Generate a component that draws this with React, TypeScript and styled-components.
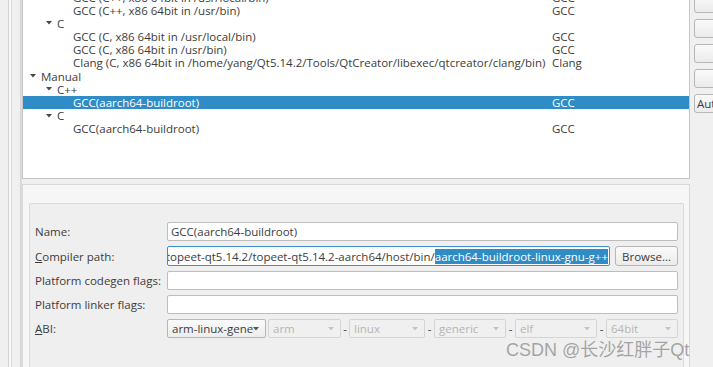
import React from "react";
import styled, { createGlobalStyle } from "styled-components";

const Global = createGlobalStyle`
  html, body { margin: 0; padding: 0; width: 713px; height: 367px; overflow: hidden; background: #f0f0f0; }
  body { font-family: "Open Sans", "Noto Sans", sans-serif; font-size: 11.5px; color: #3c3c3c; }
  * { box-sizing: border-box; }
`;

const Root = styled.div`
  position: relative;
  display: grid;
  grid-template-columns: 22px 668px 4px 80px;
  height: 367px;
  overflow: hidden;
`;

const Gutter = styled.div`
  display: flex;
`;

const Rail = styled.div<{ $left: number; $w: number }>`
  margin-left: ${(p) => p.$left}px;
  width: ${(p) => p.$w}px;
  border-left: 1px solid #d4d4d4;
  border-right: 1px solid #dcdcdc;
  background: #f8f8f8;
`;

const Main = styled.div`
  display: flex;
  flex-direction: column;
  min-width: 0;
`;

const TreePanel = styled.div`
  height: 179px;
  flex: none;
  background: #ffffff;
  border: 1px solid #c6c6c6;
  border-top: none;
  overflow: hidden;
`;

const TreeList = styled.div`
  margin-top: -9.5px;
`;

const Row = styled.div<{ $selected?: boolean }>`
  display: grid;
  grid-template-columns: 529px 1fr;
  height: 13.2px;
  line-height: 13.2px;
  white-space: nowrap;
  background: ${(p) => (p.$selected ? "#308cc6" : "transparent")};
  color: ${(p) => (p.$selected ? "#ffffff" : "#3c3c3c")};
`;

const NameCell = styled.div<{ $level: number }>`
  display: flex;
  align-items: center;
  padding-left: ${(p) => 2 + p.$level * 16}px;
  overflow: hidden;
`;

const Expander = styled.span`
  width: 16px;
  flex: none;
  display: flex;
  align-items: center;
  padding-left: 5px;
`;

const TypeCell = styled.div`
  overflow: hidden;
`;

const DetailsPanel = styled.div`
  margin-top: 5px;
  flex: 1;
  min-width: 0;
  background: #f6f6f6;
  border: 1px solid #d9d9d9;
  border-bottom: none;
  padding: 18px 5px 0 6px;
`;

const GroupBox = styled.div`
  height: 100%;
  background: #efefef;
  border: 1px solid #dadada;
  border-bottom: none;
  border-radius: 2px 2px 0 0;
  padding: 18px 5px 0 5px;
`;

const Form = styled.div`
  display: grid;
  grid-template-columns: 132px minmax(0, 1fr);
  row-gap: 5px;
  align-items: center;
`;

const Label = styled.div`
  white-space: nowrap;
  color: #3c3c3c;
`;

const Mnemonic = styled.span`
  text-decoration: underline;
`;

const Field = styled.div<{ $focused?: boolean; $h?: number }>`
  height: ${(p) => p.$h ?? 19}px;
  background: #ffffff;
  border: 1px solid ${(p) => (p.$focused ? "#3a8fc8" : "#bdbdbd")};
  border-radius: 2px;
  padding: 0 3px;
  display: flex;
  align-items: center;
  overflow: hidden;
  white-space: nowrap;
  min-width: 0;
`;

const PathRow = styled.div`
  display: flex;
  gap: 5px;
  height: 20px;
  min-width: 0;
`;

const PathField = styled(Field)`
  flex: 1 1 0;
  justify-content: flex-end;
  padding: 0 1px 0 2px;
`;

const PathText = styled.span`
  flex: none;
`;

const Selection = styled.span`
  flex: none;
  background: #308cc6;
  color: #ffffff;
`;

const Button = styled.div<{ $w?: number }>`
  width: ${(p) => (p.$w ? `${p.$w}px` : "auto")};
  flex: none;
  height: 20px;
  border: 1px solid #b6b6b6;
  border-radius: 3px;
  background: linear-gradient(#fafafa, #ebebeb);
  display: flex;
  align-items: center;
  justify-content: center;
  color: #3c3c3c;
  white-space: nowrap;
`;

const AbiRow = styled.div`
  display: flex;
  align-items: center;
  height: 19px;
`;

const Combo = styled.div<{ $w: number; $disabled?: boolean }>`
  width: ${(p) => p.$w}px;
  flex: none;
  height: 19px;
  border: 1px solid ${(p) => (p.$disabled ? "#d5d5d5" : "#b6b6b6")};
  border-radius: 2px;
  background: ${(p) => (p.$disabled ? "#f0f0f0" : "linear-gradient(#fbfbfb, #ededed)")};
  color: ${(p) => (p.$disabled ? "#b5b5b5" : "#3c3c3c")};
  display: flex;
  align-items: center;
  padding: 0 6px 0 4px;
`;

const ComboText = styled.span`
  flex: 1;
  overflow: hidden;
  white-space: nowrap;
`;

const Sep = styled.span<{ $w: number }>`
  width: ${(p) => p.$w}px;
  flex: none;
  text-align: center;
  color: #3c3c3c;
`;

const Spacer = styled.span<{ $w: number }>`
  width: ${(p) => p.$w}px;
  flex: none;
`;

const Side = styled.div`
  display: flex;
  flex-direction: column;
  gap: 6px;
  margin-top: -6px;
`;

const SideButton = styled(Button)`
  height: 19px;
  width: 80px;
  justify-content: flex-start;
  padding-left: 2px;
`;

const Watermark = styled.div`
  position: absolute;
  left: 506px;
  top: 335px;
  font-family: "Liberation Sans", "Noto Sans CJK SC", sans-serif;
  font-size: 18px;
  color: rgba(150, 150, 150, 0.85);
  white-space: nowrap;
  pointer-events: none;
`;

const Arrow = ({ color }: { color: string }) => (
  <svg width="6" height="4" viewBox="0 0 6 4">
    <polygon points="0,0 6,0 3,3.5" fill={color} />
  </svg>
);

type Item = { name: string; type?: string; level: number; branch?: boolean; selected?: boolean };

const items: Item[] = [
  { name: "GCC (C++, x86 64bit in /usr/local/bin)", type: "GCC", level: 2 },
  { name: "GCC (C++, x86 64bit in /usr/bin)", type: "GCC", level: 2 },
  { name: "C", level: 1, branch: true },
  { name: "GCC (C, x86 64bit in /usr/local/bin)", type: "GCC", level: 2 },
  { name: "GCC (C, x86 64bit in /usr/bin)", type: "GCC", level: 2 },
  {
    name: "Clang (C, x86 64bit in /home/yang/Qt5.14.2/Tools/QtCreator/libexec/qtcreator/clang/bin)",
    type: "Clang",
    level: 2,
  },
  { name: "Manual", level: 0, branch: true },
  { name: "C++", level: 1, branch: true },
  { name: "GCC(aarch64-buildroot)", type: "GCC", level: 2, selected: true },
  { name: "C", level: 1, branch: true },
  { name: "GCC(aarch64-buildroot)", type: "GCC", level: 2 },
];

const abiParts = [
  { text: "linux", w: 76, sep: 8 },
  { text: "generic", w: 72, sep: 9 },
  { text: "elf", w: 82, sep: 9 },
  { text: "64bit", w: 72, sep: 9 },
];

export default function App() {
  return (
    <>
      <Global />
      <Root>
        <Gutter>
          <Rail $left={8} $w={4} />
          <Rail $left={8} $w={2} />
        </Gutter>
        <Main>
          <TreePanel>
            <TreeList>
              {items.map((it, i) => (
                <Row key={i} $selected={it.selected}>
                  <NameCell $level={it.level}>
                    <Expander>{it.branch && <Arrow color="#4a4a4a" />}</Expander>
                    <span>{it.name}</span>
                  </NameCell>
                  <TypeCell>{it.type ?? ""}</TypeCell>
                </Row>
              ))}
            </TreeList>
          </TreePanel>
          <DetailsPanel>
            <GroupBox>
              <Form>
                <Label>Name:</Label>
                <Field>GCC(aarch64-buildroot)</Field>

                <Label>
                  <Mnemonic>C</Mnemonic>ompiler path:
                </Label>
                <PathRow>
                  <PathField $focused $h={20}>
                    <PathText>/home/yang/topeet-qt5.14.2/topeet-qt5.14.2-aarch64/host/bin/</PathText>
                    <Selection>aarch64-buildroot-linux-gnu-g++</Selection>
                  </PathField>
                  <Button $w={63}>Browse...</Button>
                </PathRow>

                <Label>Platform codegen flags:</Label>
                <Field />

                <Label>Platform linker flags:</Label>
                <Field />

                <Label>
                  <Mnemonic>A</Mnemonic>BI:
                </Label>
                <AbiRow>
                  <Combo $w={99}>
                    <ComboText>arm-linux-generic-elf-64bit</ComboText>
                    <Arrow color="#555555" />
                  </Combo>
                  <Spacer $w={2} />
                  <Combo $w={73} $disabled>
                    <ComboText>arm</ComboText>
                    <Arrow color="#c4c4c4" />
                  </Combo>
                  {abiParts.map((p) => (
                    <React.Fragment key={p.text}>
                      <Sep $w={p.sep}>-</Sep>
                      <Combo $w={p.w} $disabled>
                        <ComboText>{p.text}</ComboText>
                        <Arrow color="#c4c4c4" />
                      </Combo>
                    </React.Fragment>
                  ))}
                </AbiRow>
              </Form>
            </GroupBox>
          </DetailsPanel>
        </Main>
        <div />
        <Side>
          <SideButton />
          <SideButton />
          <SideButton />
          <SideButton />
          <SideButton>Auto-detect</SideButton>
        </Side>
        <Watermark>CSDN @长沙红胖子Qt</Watermark>
      </Root>
    </>
  );
}
